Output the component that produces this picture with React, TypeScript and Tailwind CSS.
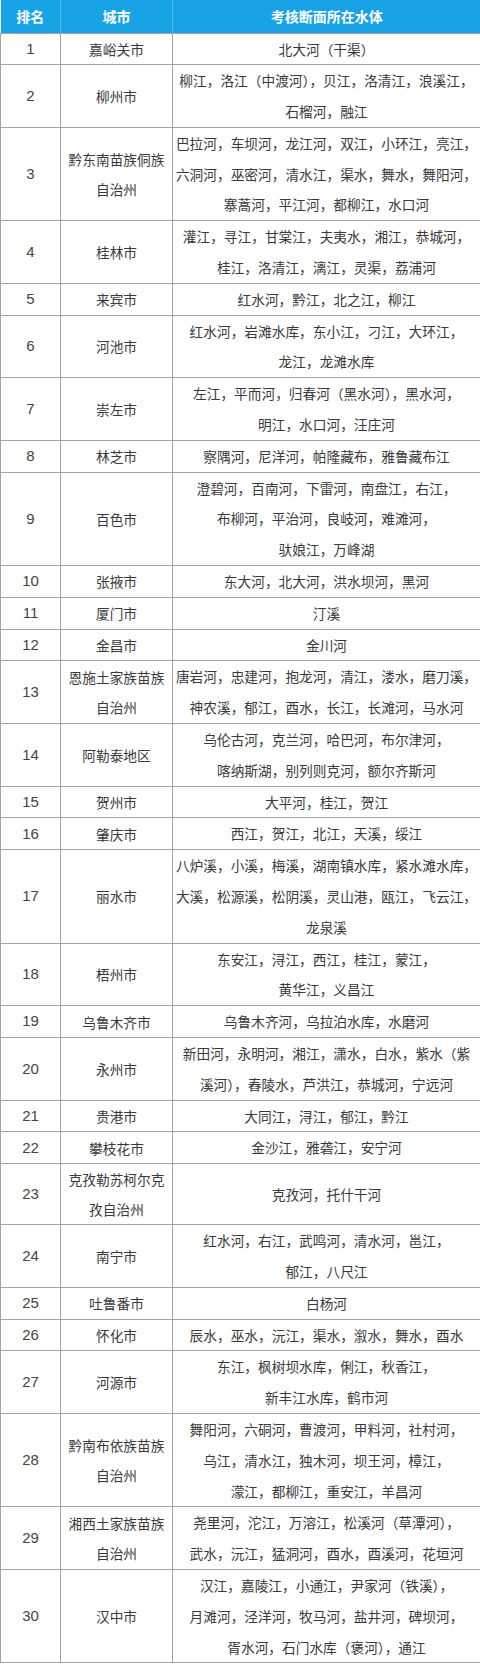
import React from "react";

type Row = { rank: number; city: string[]; water: string[] };

const rows: Row[] = [
  { rank: 1, city: ["嘉峪关市"], water: ["北大河（干渠）"] },
  { rank: 2, city: ["柳州市"], water: ["柳江，洛江（中渡河），贝江，洛清江，浪溪江，", "石榴河，融江"] },
  { rank: 3, city: ["黔东南苗族侗族", "自治州"], water: ["巴拉河，车坝河，龙江河，双江，小环江，亮江，", "六洞河，巫密河，清水江，渠水，舞水，舞阳河，", "寨蒿河，平江河，都柳江，水口河"] },
  { rank: 4, city: ["桂林市"], water: ["灌江，寻江，甘棠江，夫夷水，湘江，恭城河，", "桂江，洛清江，漓江，灵渠，荔浦河"] },
  { rank: 5, city: ["来宾市"], water: ["红水河，黔江，北之江，柳江"] },
  { rank: 6, city: ["河池市"], water: ["红水河，岩滩水库，东小江，刁江，大环江，", "龙江，龙滩水库"] },
  { rank: 7, city: ["崇左市"], water: ["左江，平而河，归春河（黑水河），黑水河，", "明江，水口河，汪庄河"] },
  { rank: 8, city: ["林芝市"], water: ["察隅河，尼洋河，帕隆藏布，雅鲁藏布江"] },
  { rank: 9, city: ["百色市"], water: ["澄碧河，百南河，下雷河，南盘江，右江，", "布柳河，平治河，良岐河，难滩河，", "驮娘江，万峰湖"] },
  { rank: 10, city: ["张掖市"], water: ["东大河，北大河，洪水坝河，黑河"] },
  { rank: 11, city: ["厦门市"], water: ["汀溪"] },
  { rank: 12, city: ["金昌市"], water: ["金川河"] },
  { rank: 13, city: ["恩施土家族苗族", "自治州"], water: ["唐岩河，忠建河，抱龙河，清江，溇水，磨刀溪，", "神农溪，郁江，酉水，长江，长滩河，马水河"] },
  { rank: 14, city: ["阿勒泰地区"], water: ["乌伦古河，克兰河，哈巴河，布尔津河，", "喀纳斯湖，别列则克河，额尔齐斯河"] },
  { rank: 15, city: ["贺州市"], water: ["大平河，桂江，贺江"] },
  { rank: 16, city: ["肇庆市"], water: ["西江，贺江，北江，天溪，绥江"] },
  { rank: 17, city: ["丽水市"], water: ["八炉溪，小溪，梅溪，湖南镇水库，紧水滩水库，", "大溪，松源溪，松阴溪，灵山港，瓯江，飞云江，", "龙泉溪"] },
  { rank: 18, city: ["梧州市"], water: ["东安江，浔江，西江，桂江，蒙江，", "黄华江，义昌江"] },
  { rank: 19, city: ["乌鲁木齐市"], water: ["乌鲁木齐河，乌拉泊水库，水磨河"] },
  { rank: 20, city: ["永州市"], water: ["新田河，永明河，湘江，潇水，白水，紫水（紫", "溪河），舂陵水，芦洪江，恭城河，宁远河"] },
  { rank: 21, city: ["贵港市"], water: ["大同江，浔江，郁江，黔江"] },
  { rank: 22, city: ["攀枝花市"], water: ["金沙江，雅砻江，安宁河"] },
  { rank: 23, city: ["克孜勒苏柯尔克", "孜自治州"], water: ["克孜河，托什干河"] },
  { rank: 24, city: ["南宁市"], water: ["红水河，右江，武鸣河，清水河，邕江，", "郁江，八尺江"] },
  { rank: 25, city: ["吐鲁番市"], water: ["白杨河"] },
  { rank: 26, city: ["怀化市"], water: ["辰水，巫水，沅江，渠水，溆水，舞水，酉水"] },
  { rank: 27, city: ["河源市"], water: ["东江，枫树坝水库，俐江，秋香江，", "新丰江水库，鹤市河"] },
  { rank: 28, city: ["黔南布依族苗族", "自治州"], water: ["舞阳河，六硐河，曹渡河，甲料河，社村河，", "乌江，清水江，独木河，坝王河，樟江，", "濛江，都柳江，重安江，羊昌河"] },
  { rank: 29, city: ["湘西土家族苗族", "自治州"], water: ["尧里河，沱江，万溶江，松溪河（草潭河），", "武水，沅江，猛洞河，酉水，酉溪河，花垣河"] },
  { rank: 30, city: ["汉中市"], water: ["汉江，嘉陵江，小通江，尹家河（铁溪），", "月滩河，泾洋河，牧马河，盐井河，碑坝河，", "胥水河，石门水库（褒河），通江"] },
];

const cjk = { fontFamily: '"Noto Sans CJK SC", "Noto Sans", sans-serif' };
const num = { fontFamily: '"Liberation Sans", Arial, sans-serif' };

export default function App() {
  return (
    <div className="w-[480px] bg-white" style={cjk}>
      <table className="w-[480px] border-collapse table-fixed">
        <colgroup>
          <col className="w-[60px]" />
          <col className="w-[112px]" />
          <col className="w-[308px]" />
        </colgroup>
        <thead>
          <tr className="bg-[#17a3e6] text-white text-[14px] font-bold">
            <th className="h-[33px] p-0 border-r border-[#4cb6ea] text-center align-middle">排名</th>
            <th className="h-[33px] p-0 border-r border-[#4cb6ea] text-center align-middle">城市</th>
            <th className="h-[33px] p-0 text-center align-middle">考核断面所在水体</th>
          </tr>
        </thead>
        <tbody>
          {rows.map((r) => (
            <tr key={r.rank}>
              <td className="p-0 border border-[#a3a3a3] text-center align-middle text-[15px] text-[#444]" style={num}>
                {r.rank}
              </td>
              <td className="p-0 border border-[#a3a3a3] text-center align-middle text-[13.7px] text-[#3a3a3a] leading-[30px] whitespace-nowrap">
                {r.city.map((c, i) => (
                  <div key={i}>{c}</div>
                ))}
              </td>
              <td className="p-0 border border-[#a3a3a3] text-center align-middle text-[13.7px] text-[#3a3a3a] leading-[30.8px] whitespace-nowrap overflow-hidden">
                {r.water.map((w, i) => (
                  <div key={i}>{w}</div>
                ))}
              </td>
            </tr>
          ))}
        </tbody>
      </table>
    </div>
  );
}
